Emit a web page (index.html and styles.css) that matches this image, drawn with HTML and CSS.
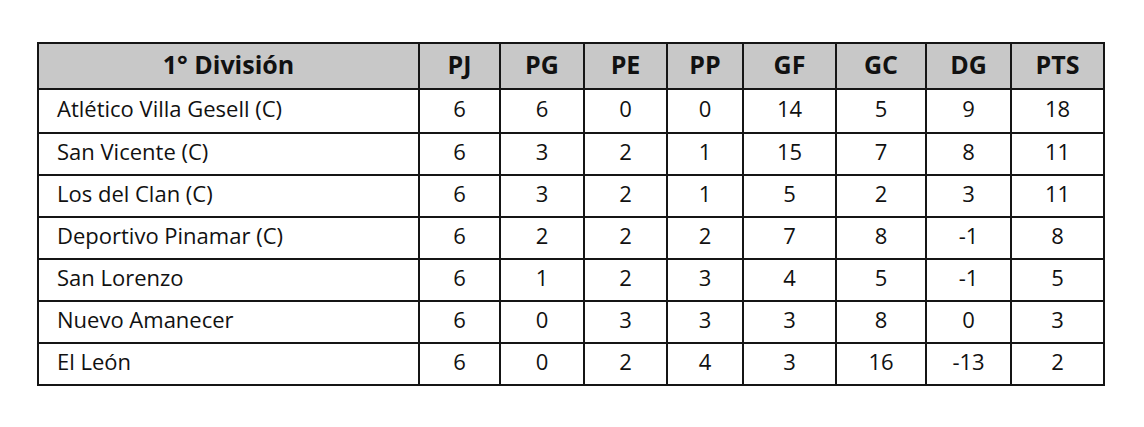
FILE: index.html
```html
<!DOCTYPE html>
<html lang="es">
<head>
<meta charset="utf-8">
<link rel="stylesheet" href="styles.css">
</head>
<body>
<div class="wrap">
<table class="standings">
<thead>
<tr class="head">
<th class="c-team">1° División</th>
<th class="c-pj">PJ</th>
<th class="c-pg">PG</th>
<th class="c-pe">PE</th>
<th class="c-pp">PP</th>
<th class="c-gf">GF</th>
<th class="c-gc">GC</th>
<th class="c-dg">DG</th>
<th class="c-pts">PTS</th>
</tr>
</thead>
<tbody>
<tr class="first"><td class="team">Atlético Villa Gesell (C)</td><td>6</td><td>6</td><td>0</td><td>0</td><td>14</td><td>5</td><td>9</td><td>18</td></tr>
<tr><td class="team">San Vicente (C)</td><td>6</td><td>3</td><td>2</td><td>1</td><td>15</td><td>7</td><td>8</td><td>11</td></tr>
<tr><td class="team">Los del Clan (C)</td><td>6</td><td>3</td><td>2</td><td>1</td><td>5</td><td>2</td><td>3</td><td>11</td></tr>
<tr><td class="team">Deportivo Pinamar (C)</td><td>6</td><td>2</td><td>2</td><td>2</td><td>7</td><td>8</td><td>-1</td><td>8</td></tr>
<tr><td class="team">San Lorenzo</td><td>6</td><td>1</td><td>2</td><td>3</td><td>4</td><td>5</td><td>-1</td><td>5</td></tr>
<tr><td class="team">Nuevo Amanecer</td><td>6</td><td>0</td><td>3</td><td>3</td><td>3</td><td>8</td><td>0</td><td>3</td></tr>
<tr><td class="team">El León</td><td>6</td><td>0</td><td>2</td><td>4</td><td>3</td><td>16</td><td>-13</td><td>2</td></tr>
</tbody>
</table>
</div>
</body>
</html>
```
FILE: styles.css
```css
html, body {
  margin: 0;
  padding: 0;
  background: #ffffff;
}
.wrap {
  padding: 42px 0 0 37px;
}
.standings {
  table-layout: fixed;
  border-collapse: separate;
  border-spacing: 2px;
  background: #151515;
  font-family: "Open Sans", "Noto Sans", sans-serif;
  color: #111;
  font-size: 22px;
  line-height: 26px;
}
.standings th,
.standings td {
  box-sizing: border-box;
  background: #fff;
  padding: 0 0 6px 0;
  text-align: center;
  vertical-align: middle;
}
.head th {
  background: #c8c8c8;
  height: 44px;
  font-weight: 700;
  font-size: 25px;
  line-height: 30px;
  padding-bottom: 5px;
}
.standings td { height: 40px; }
.first td { height: 42px; }
.standings td.team {
  text-align: left;
  padding-left: 18px;
}
.c-team { width: 379px; }
.c-pj { width: 79px; }
.c-pg { width: 82px; }
.c-pe { width: 81px; }
.c-pp { width: 74px; }
.c-gf { width: 91px; }
.c-gc { width: 88px; }
.c-dg { width: 83px; }
.c-pts { width: 91px; }
```
